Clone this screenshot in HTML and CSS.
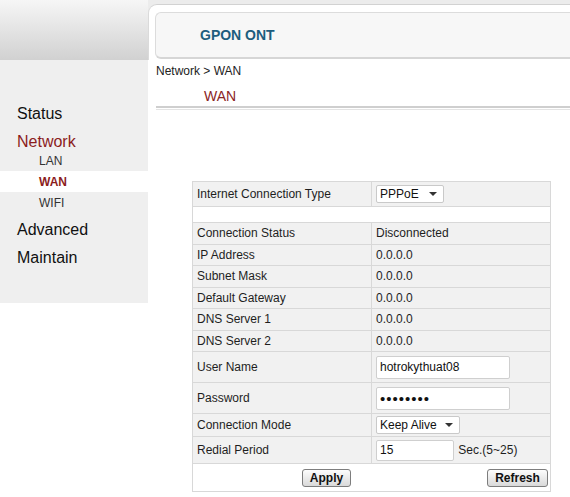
FILE: index.html
```html
<!DOCTYPE html>
<html lang="en">
	<head>
		<meta charset="UTF-8" />
		<meta name="viewport" content="width=device-width, initial-scale=1.0" />
		<title>GPON ONT</title>
		<link rel="stylesheet" href="styles.css">
	</head>
	<body>
		<div class="layout">
			<aside class="side">
				<div class="side-top"></div>
				<nav class="menu">
					<a class="menu-item" href="#">Status</a>
					<a class="menu-item is-open" href="#">Network</a>
					<div class="submenu">
						<a class="sub-item" href="#">LAN</a>
						<a class="sub-item is-active" href="#">WAN</a>
						<a class="sub-item" href="#">WIFI</a>
					</div>
					<a class="menu-item" href="#">Advanced</a>
					<a class="menu-item" href="#">Maintain</a>
				</nav>
			</aside>

			<main class="main">
				<header class="banner">
					<div class="frame">
						<div class="brand">GPON ONT</div>
					</div>
				</header>

				<div class="crumb">Network &gt; WAN</div>
				<h2 class="page-title">WAN</h2>
				<div class="rule"></div>

				<form class="wan-form">
					<table class="wan-table">
						<tr class="row-type">
							<td class="label">Internet Connection Type</td>
							<td>
								<span class="select">
									<select class="select-type">
										<option>PPPoE</option>
										<option>DHCP</option>
										<option>Static</option>
									</select>
								</span>
							</td>
						</tr>
						<tr class="row-gap">
							<td colspan="2"></td>
						</tr>
						<tr class="row-info">
							<td class="label">Connection Status</td>
							<td>Disconnected</td>
						</tr>
						<tr class="row-info">
							<td class="label">IP Address</td>
							<td>0.0.0.0</td>
						</tr>
						<tr class="row-info">
							<td class="label">Subnet Mask</td>
							<td>0.0.0.0</td>
						</tr>
						<tr class="row-info">
							<td class="label">Default Gateway</td>
							<td>0.0.0.0</td>
						</tr>
						<tr class="row-info">
							<td class="label">DNS Server 1</td>
							<td>0.0.0.0</td>
						</tr>
						<tr class="row-info">
							<td class="label">DNS Server 2</td>
							<td>0.0.0.0</td>
						</tr>
						<tr class="row-field">
							<td class="label">User Name</td>
							<td><input class="field" type="text" value="hotrokythuat08" /></td>
						</tr>
						<tr class="row-field">
							<td class="label">Password</td>
							<td><input class="field" type="password" value="12345678" /></td>
						</tr>
						<tr class="row-mode">
							<td class="label">Connection Mode</td>
							<td>
								<span class="select">
									<select class="select-mode">
										<option>Keep Alive</option>
										<option>On Demand</option>
										<option>Manual</option>
									</select>
								</span>
							</td>
						</tr>
						<tr class="row-redial">
							<td class="label">Redial Period</td>
							<td>
								<input class="field field-short" type="text" value="15" />
								<span class="unit">Sec.(5~25)</span>
							</td>
						</tr>
						<tr class="row-actions">
							<td colspan="2">
								<div class="actions">
									<button type="button" class="btn btn-apply">Apply</button>
									<button type="button" class="btn btn-refresh">Refresh</button>
								</div>
							</td>
						</tr>
					</table>
				</form>
			</main>
		</div>
	</body>
</html>
```

FILE: styles.css
```css
* {
	box-sizing: border-box;
}

body {
	margin: 0;
	font-family: 'Liberation Sans', Arial, sans-serif;
	font-size: 12px;
	color: #1e1e1e;
	background: #fff;
}

.layout {
	display: grid;
	grid-template-columns: 148px 1fr;
	min-height: 497px;
}

/* Left column */
.side-top {
	height: 60px;
	background: linear-gradient(#f6f6f6, #d1d1d1);
}

.menu {
	display: flex;
	flex-direction: column;
	height: 243px;
	padding-top: 40px;
	background: #efefef;
}

.menu-item {
	padding-left: 17px;
	font-size: 16px;
	line-height: 28px;
	color: #111;
	text-decoration: none;
}

.menu-item.is-open {
	color: #8b1c1c;
}

.submenu {
	display: flex;
	flex-direction: column;
	margin: -6px 0 3px;
}

.sub-item {
	padding: 2px 0 0 39px;
	line-height: 19px;
	color: #333;
	text-decoration: none;
}

.sub-item.is-active {
	background: #fff;
	color: #8b1c1c;
	font-weight: bold;
}

/* Header */
.banner {
	height: 60px;
	padding-top: 4px;
	background: #ececec;
}

.frame {
	height: 56px;
	padding: 7px 0 0 6px;
	background: #fff;
	border-top: 1px solid #d2d2d2;
	border-left: 1px solid #dadada;
	border-top-left-radius: 9px;
}

.brand {
	display: flex;
	align-items: center;
	height: 47px;
	padding-left: 44px;
	background: #f7f7f7;
	border: 1px solid #dcdcdc;
	border-right: 0;
	border-bottom: 2px solid #d6d6d6;
	border-radius: 6px 0 0 6px;
	font-size: 14px;
	font-weight: bold;
	color: #1d5d7e;
}

.crumb {
	margin: 3px 0 0 8px;
	line-height: 16px;
	color: #222;
}

.page-title {
	margin: 8px 0 0 56px;
	font-size: 14px;
	font-weight: normal;
	line-height: 18px;
	color: #8b2424;
}

.rule {
	height: 4px;
	margin: 1px 0 0 8px;
	border-top: 2px solid #cfcfcf;
	border-bottom: 1px solid #e4e4e4;
}

/* WAN settings table */
.wan-form {
	margin: 71px 0 0 44px;
}

.wan-table {
	width: 359px;
	border-collapse: collapse;
}

.wan-table td {
	height: 21.5px;
	padding: 0 4px;
	background: #f1f1f1;
	border: 1px solid #d8d8d8;
	vertical-align: middle;
}

.wan-table td.label {
	width: 179px;
}

.row-type td {
	height: 25px;
}

.row-gap td {
	height: 16px;
	background: #fff;
}

.row-field td {
	height: 31px;
}

.row-mode td {
	height: 23px;
}

.row-redial td {
	height: 27px;
}

.row-actions td {
	height: 28px;
	padding: 0 2px;
	background: #fff;
}

/* Form controls */
.select {
	position: relative;
	display: inline-block;
	vertical-align: middle;
}

.select select {
	appearance: none;
	-webkit-appearance: none;
	height: 18px;
	padding: 0 0 0 3px;
	background: #fff;
	border: 1px solid #c9c9c9;
	border-radius: 2px;
	font: 12px 'Liberation Sans', Arial, sans-serif;
	color: #111;
}

.select::after {
	content: '';
	position: absolute;
	right: 7px;
	top: 7px;
	border-left: 4px solid transparent;
	border-right: 4px solid transparent;
	border-top: 4px solid #333;
	pointer-events: none;
}

.select-type {
	width: 68px;
}

.select-mode {
	width: 84px;
}

.field {
	width: 134px;
	height: 23px;
	padding: 0 3px;
	background: #fff;
	border: 1px solid #cfcfcf;
	border-radius: 2px;
	font: 12px 'Liberation Sans', Arial, sans-serif;
	color: #111;
	vertical-align: middle;
}

.field[type='password'] {
	font-size: 15px;
	letter-spacing: 1px;
}

.field-short {
	width: 78px;
	height: 21px;
}

.unit {
	margin-left: 1px;
	vertical-align: middle;
}

.actions {
	display: flex;
	align-items: center;
}

.btn {
	height: 18px;
	padding: 0;
	background: linear-gradient(#fdfdfd, #d9d9d9);
	border: 1px solid #7d7d7d;
	border-radius: 3px;
	font: bold 12px 'Liberation Sans', Arial, sans-serif;
	color: #111;
}

.btn-apply {
	width: 49px;
	margin-left: 107px;
}

.btn-refresh {
	width: 61px;
	margin-left: auto;
}
```
